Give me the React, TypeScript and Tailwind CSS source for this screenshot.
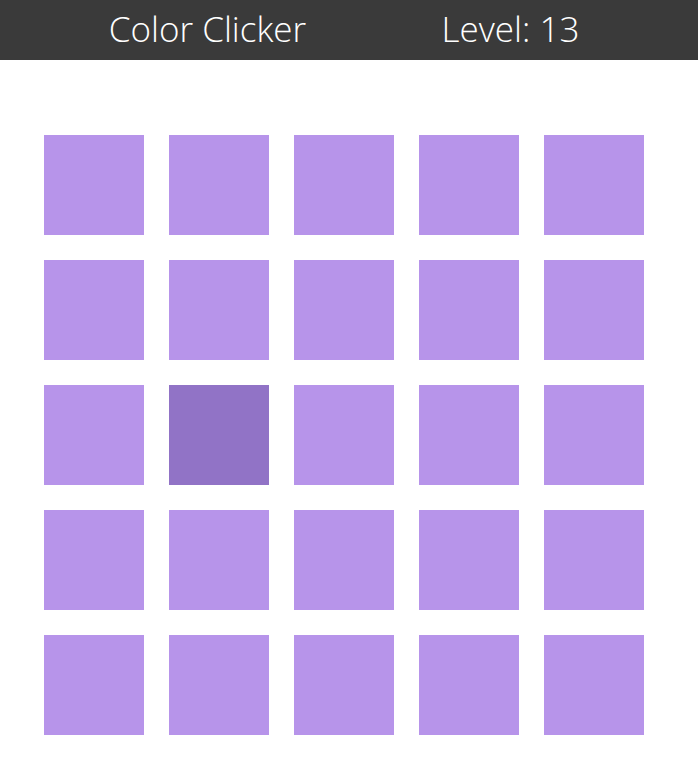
import React from "react";

export default function App() {
  const cells = Array.from({ length: 25 }, (_, i) => i);
  return (
    <div className="w-[698px] h-[766px] bg-white" style={{ fontFamily: '"Open Sans", "Noto Sans", sans-serif' }}>
      <div className="h-[60px] bg-[#3a3a3a] flex items-center pb-[4px] text-white font-light text-[35px] leading-none">
        <div className="w-[415px] text-center">Color Clicker</div>
        <div className="w-[191px] text-center">Level: 13</div>
      </div>
      <div className="pt-[75px] pl-[44px] grid grid-cols-[repeat(5,100px)] gap-[25px]">
        {cells.map((i) => (
          <div key={i} className={i === 11 ? "w-[100px] h-[100px] bg-[#9173c6]" : "w-[100px] h-[100px] bg-[#b794ea]"} />
        ))}
      </div>
    </div>
  );
}
